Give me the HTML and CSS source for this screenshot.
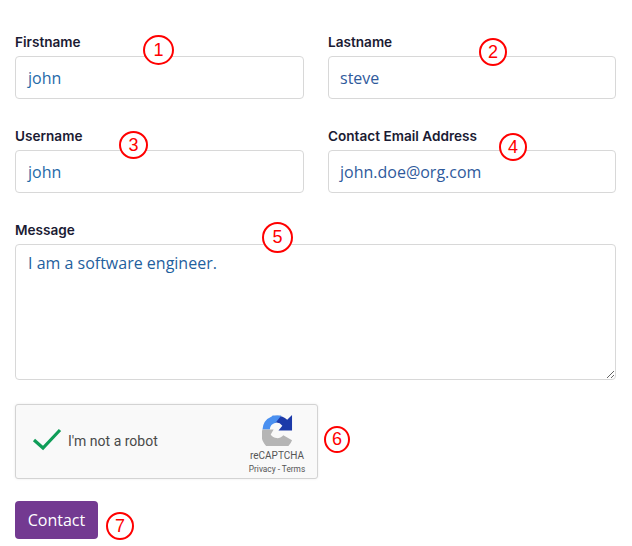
FILE: index.html
```html
<!DOCTYPE html>
<html lang="en">
<head>
<meta charset="utf-8">
<title>Contact form</title>
<link rel="stylesheet" href="styles.css">
</head>
<body>
<form class="form">
  <div class="grid">
    <div class="group"><div class="label">Firstname</div><div class="field">john</div></div>
    <div class="group"><div class="label">Lastname</div><div class="field field-dark">steve</div></div>
    <div class="group"><div class="label">Username</div><div class="field">john</div></div>
    <div class="group"><div class="label">Contact Email Address</div><div class="field field-dark">john.doe@org.com</div></div>
  </div>
  <div class="group"><div class="label">Message</div><div class="field area">I am a software engineer.</div></div>
  <div class="captcha">
    <svg class="check" viewBox="0 0 30 24" width="30" height="24"><path d="M2 13 L11 21 L28 3" fill="none" stroke="#0f9d58" stroke-width="3.2"/></svg>
    <span class="robot">I'm not a robot</span>
    <div class="brand">
      <svg class="logo" viewBox="0 0 32 32" width="31" height="31">
        <path d="M13 1 A15.5 15.5 0 0 1 26 5 L31 0 L31 16 L17 16 L21 11 A8 8 0 0 0 13 8 Z" fill="#1c3aa9"/>
        <path d="M0.5 15 A15.5 15.5 0 0 1 10 1.5 L11 0.5 L20 0.5 L14 8 A8 8 0 0 0 8 15 Z" fill="#4a90f0"/>
        <path d="M0.5 15 L12 15 L9 20 A8 8 0 0 0 22 21 L31 26 A15.5 15.5 0 0 1 0.5 15 Z" fill="#b5b5b5"/>
      </svg>
      <div class="brand-name">reCAPTCHA</div>
      <div class="brand-links">Privacy - Terms</div>
    </div>
  </div>
  <button class="submit" type="button">Contact</button>
</form>
<span class="mark mark-1">1</span>
<span class="mark mark-2">2</span>
<span class="mark mark-3">3</span>
<span class="mark mark-4">4</span>
<span class="mark mark-5">5</span>
<span class="mark mark-6">6</span>
<span class="mark mark-7">7</span>
</body>
</html>
```
FILE: styles.css
```css
* { box-sizing: border-box; }
html, body { margin: 0; height: 100%; background: #fff; overflow: hidden; }
body { position: relative; font-family: "Open Sans", sans-serif; }
.form { display: flex; flex-direction: column; padding: 33px 16px 0 15px; }
.grid { display: grid; grid-template-columns: 289px 288px; column-gap: 24px; row-gap: 28px; margin-bottom: 28px; }
.group { display: flex; flex-direction: column; }
.label { font-family: Inter, sans-serif; font-weight: 600; font-size: 13.6px; line-height: 18px; height: 18px; margin-bottom: 5px; color: #1b1b33; }
.field { height: 43px; padding: 0 12px; border: 1px solid #d8d8d8; border-radius: 4px; font-size: 16px; line-height: 42px; color: #1f6aa8; background: #fff; }
.field-dark { padding-left: 11px; color: #2f5a9c; }
.area { height: 136px; line-height: 36px; color: #1f5f9e; resize: vertical; overflow: auto; }
.captcha { display: flex; align-items: flex-start; width: 303px; height: 75px; margin-top: 24px; padding: 0 11px 0 16px; background: #f9f9f9; border: 1px solid #d3d3d3; border-radius: 3px; box-shadow: 0 0 3px rgba(0,0,0,.08); }
.check { flex: none; margin-top: 22px; }
.robot { margin-left: 6px; margin-top: 27px; font-family: Roboto, sans-serif; font-size: 14px; line-height: 18px; color: #4a4a4a; }
.brand { margin-left: auto; margin-top: 10px; width: 58px; display: flex; flex-direction: column; align-items: center; font-family: Roboto, sans-serif; color: #555; }
.logo { display: block; margin-bottom: 4px; }
.brand-name { font-size: 10px; line-height: 12px; }
.brand-links { font-size: 8.3px; line-height: 12px; margin-top: 1px; white-space: nowrap; }
.submit { align-self: flex-start; width: 83px; height: 38px; margin-top: 22px; padding: 0; border: 0; border-radius: 4px; background: #733a91; color: #fff; font-family: "Open Sans", sans-serif; font-size: 16px; }
.mark { position: absolute; display: flex; align-items: center; justify-content: center; width: 30px; height: 30px; border: 2px solid #f00; border-radius: 50%; background: #fff; color: #f00; font-family: "Liberation Sans", sans-serif; font-size: 18px; }
.mark-1 { left: 143px; top: 35px; width: 31px; }
.mark-2 { left: 479px; top: 38px; width: 28px; height: 28px; }
.mark-3 { left: 119px; top: 131px; width: 29px; height: 28px; }
.mark-4 { left: 499px; top: 133px; width: 28px; height: 28px; }
.mark-5 { left: 262px; top: 222px; width: 31px; height: 31px; }
.mark-6 { left: 324px; top: 426px; width: 26px; height: 27px; }
.mark-7 { left: 106px; top: 512px; width: 28px; height: 28px; }
```
